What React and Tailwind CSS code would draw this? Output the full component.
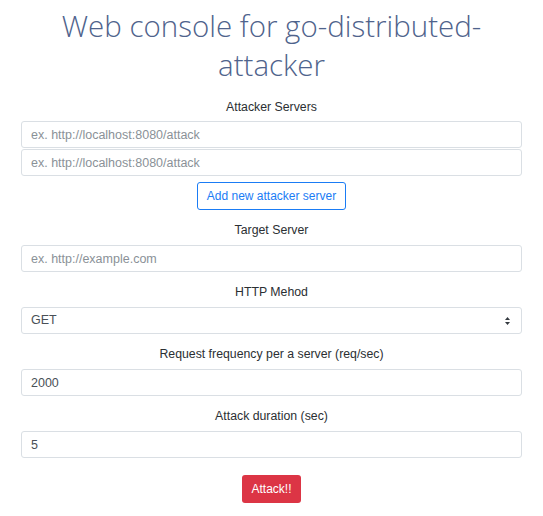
import React from 'react';

const Label = ({ children, className = '' }) => (
  <div className={`text-center text-[12.3px] leading-[18px] text-[#2b2f33] ${className}`}>{children}</div>
);

const Input = ({ placeholder, value, className = '' }) => (
  <input
    className={`block w-full h-[27px] px-[9px] text-[12.5px] text-[#495057] placeholder:text-[#8a9197] bg-white border border-[#dadfe4] rounded-[3px] outline-none ${className}`}
    placeholder={placeholder}
    defaultValue={value}
  />
);

export default function App() {
  return (
    <div className="w-[543px] h-[516px] bg-white px-[21px]" style={{ fontFamily: '"Liberation Sans", Arial, sans-serif' }}>
      <h1
        className="pt-[6px] text-center text-[29.5px] leading-[39px] font-light text-[#4f638c]"
        style={{ fontFamily: '"Open Sans", sans-serif' }}
      >
        Web console for go-distributed-
        <br />
        attacker
      </h1>

      <Label className="mt-[14px]">Attacker Servers</Label>
      <div className="mt-[5px] flex flex-col gap-[1px]">
        <Input placeholder="ex. http://localhost:8080/attack" />
        <Input placeholder="ex. http://localhost:8080/attack" />
      </div>
      <div className="mt-[6px] flex justify-center">
        <button className="h-[28px] px-[9px] text-[12px] text-[#1a7cf5] border border-[#1a7cf5] rounded-[3px] bg-white">
          Add new attacker server
        </button>
      </div>

      <Label className="mt-[11px]">Target Server</Label>
      <Input className="mt-[6px]" placeholder="ex. http://example.com" />

      <Label className="mt-[11px]">HTTP Mehod</Label>
      <div className="relative mt-[6px] h-[27px] px-[9px] flex items-center justify-between text-[12.5px] text-[#495057] border border-[#dadfe4] rounded-[3px] bg-white">
        <span>GET</span>
        <svg width="7" height="10" viewBox="0 0 7 10" className="mr-[1px]">
          <path d="M3.5 1 L6 4 H1 Z" fill="#343a40" />
          <path d="M3.5 9 L6 6 H1 Z" fill="#343a40" />
        </svg>
      </div>

      <Label className="mt-[11px]">Request frequency per a server (req/sec)</Label>
      <Input className="mt-[6px]" value="2000" />

      <Label className="mt-[11px]">Attack duration (sec)</Label>
      <Input className="mt-[6px]" value="5" />

      <div className="mt-[17px] flex justify-center">
        <button className="h-[28px] px-[9px] text-[12px] text-white bg-[#dc3545] rounded-[3px]">Attack!!</button>
      </div>
    </div>
  );
}
